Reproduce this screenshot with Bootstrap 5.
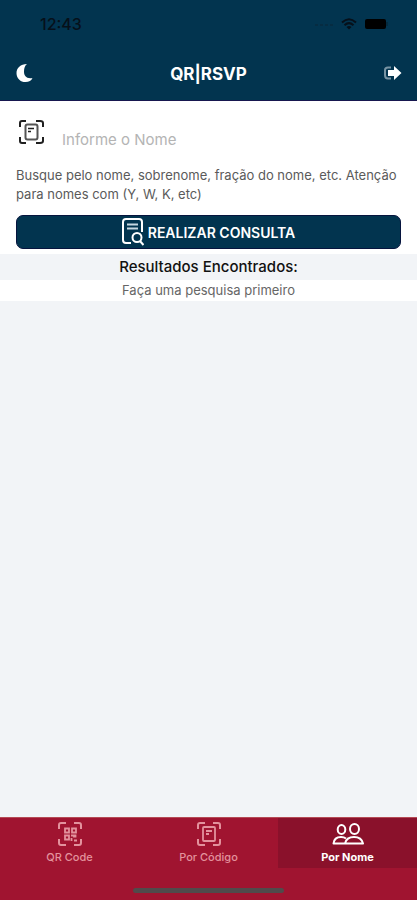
<!DOCTYPE html>
<html lang="pt-BR">
<head>
<meta charset="utf-8">
<meta name="viewport" content="width=device-width, initial-scale=1">
<title>QR|RSVP</title>
<link href="https://cdn.jsdelivr.net/npm/bootstrap@5.3.0/dist/css/bootstrap.min.css" rel="stylesheet">
<style>
body { font-family: Inter, "Liberation Sans", sans-serif; background: #f2f4f7; color: #111; }
svg { display: block; flex: none; }
.top-area { background: #02344f; border-bottom: 1px solid #17174f; }
.status-row { height: 48px; padding: 0 29px 0 40px; color: #06101a; }
.clock { font-size: 16px; font-weight: 500; }
.title-row { height: 52px; padding: 0 15px; }
.app-title { font-size: 17px; font-weight: 700; color: #fff; }
.icon-btn { border: 0; background: none; padding: 0; color: #fff; }
.name-row { height: 62px; padding: 0 16px; }
.name-input, .name-input:focus { border: 0; background: none; box-shadow: none; padding: 16px 0 0; font-size: 15px; }
.name-input::placeholder { color: #b4b4b4; }
.hint { font-size: 13px; line-height: 19px; color: #5a5a5a; padding: 3px 8px 0 16px; margin-bottom: 11px; }
.search-wrap { padding: 0 16px 5px; }
.search-btn, .search-btn:hover { height: 34px; border: 1px solid #06143e; border-radius: 7px; background: #02344f; color: #fff; font-size: 14px; font-weight: 600; }
.results-title { font-size: 15px; font-weight: 500; line-height: 26px; background: #f2f4f7; }
.results-note { font-size: 13px; line-height: 21px; color: #666; }
.tab-area { background: #a01430; border-top: 1px solid #b54a55; }
.tab-link { height: 50px; padding-top: 1px; color: #e3929d; font-size: 11px; font-weight: 500; line-height: 16px; text-decoration: none; }
.tab-link.active { background: #8a112b; color: #fff; font-weight: 700; }
.tab-icon { height: 30px; }
.home-zone { height: 32px; padding-bottom: 7px; }
.home-bar { width: 36%; height: 5px; border-radius: 3px; background: #514a4b; }
</style>
<script src="https://cdn.jsdelivr.net/npm/bootstrap@5.3.0/dist/js/bootstrap.bundle.min.js"></script>
</head>
<body class="d-flex flex-column min-vh-100">
<header class="top-area">
  <div class="status-row d-flex align-items-center justify-content-between">
    <span class="clock">12:43</span>
    <div class="d-flex align-items-center gap-2">
      <svg width="18" height="3" viewBox="0 0 18 3" fill="#062c42"><path d="M0 1h3v2H0zM5 1h3v2H5zM10 1h3v2h-3zM15 1h3v2h-3z"/></svg>
      <svg width="16" height="12" viewBox="0 0 16 12" fill="none" stroke="currentColor" stroke-width="2"><path d="M1 4.5Q8-2 15 4.5M3.5 7.200Q8 3 12.500 7.200"/><path d="M5.500 9Q8 7 10.500 9L8 11.500z" fill="currentColor" stroke="none"/></svg>
      <svg width="23" height="10" viewBox="0 0 23 10"><rect width="21" height="10" rx="2" fill="#000"/><path d="M22 3v4" stroke="#06202f"/></svg>
    </div>
  </div>
  <div class="title-row d-flex align-items-center justify-content-between">
    <button class="icon-btn" type="button" aria-label="Modo escuro"><svg width="20" height="20" viewBox="0 0 20 20" fill="currentColor"><path d="M12 0C5.500 0 1.500 4 1.500 9.200S5.500 18 10.500 18c3.500 0 6-1.500 7-4-6 1-8.500-2-8.500-6.500C9 4 10 1.500 12 0z"/></svg></button>
    <h1 class="app-title m-0">QR|RSVP</h1>
    <button class="icon-btn" type="button" aria-label="Sair"><svg width="20" height="20" viewBox="0 0 20 20"><path d="M9 3.500H6Q3 3.500 3 6v5q0 3.500 3 3.500h3" fill="none" stroke="#7894a4" stroke-width="2"/><path d="M6 6h6V2l7.500 7-7.500 7v-4H6z" fill="#fff"/></svg></button>
  </div>
</header>
<main class="flex-grow-1">
  <form class="bg-white">
    <div class="name-row d-flex align-items-center gap-3">
      <label for="nome" aria-label="Nome"><svg width="30" height="26" viewBox="0 0 30 26" fill="none" stroke="#202020" stroke-width="2"><path d="M4 8V4q0-2 2-2h4M20 2h4q3 0 3 2v4M4 18v4q0 2 2 2h4M20 24h4q3 0 3-2v-4"/><rect x="9.500" y="5.500" width="12" height="15" rx="2" stroke="#555"/><path d="M12 9.500h6M12 12.500h3" stroke-width="1.500"/></svg></label>
      <input class="form-control name-input" id="nome" type="text" placeholder="Informe o Nome">
    </div>
    <p class="hint">Busque pelo nome, sobrenome, fração do nome, etc. Atenção para nomes com (Y, W, K, etc)</p>
    <div class="search-wrap">
      <button class="btn search-btn w-100 d-flex align-items-center justify-content-center gap-1 p-0" type="button">
        <svg width="22" height="28" viewBox="0 0 22 28" fill="none" stroke="#fff" stroke-width="2"><path d="M9 25H4q-3 0-3-3V4q0-3 3-3h13q3 0 3 3v10"/><path d="M5 6.500h11M5 10.500h11" stroke="#c6d7e1"/><circle cx="15" cy="19.500" r="4.500"/><path d="m18 23 3.500 4"/></svg>
        <span>REALIZAR CONSULTA</span>
      </button>
    </div>
  </form>
  <section class="bg-white text-center">
    <h2 class="results-title m-0">Resultados Encontrados:</h2>
    <p class="results-note m-0">Faça uma pesquisa primeiro</p>
  </section>
</main>
<footer class="tab-area">
  <nav class="row g-0 text-center">
    <a class="col tab-link" href="#qr">
      <span class="tab-icon d-flex align-items-center justify-content-center"><svg width="26" height="26" viewBox="0 0 26 26" fill="none" stroke="currentColor" stroke-width="2"><path d="M2 8V4q0-2 2-2h5M17 2h5q2 0 2 2v4M2 18v4q0 2 2 2h5M17 24h5q2 0 2-2v-4"/><path d="M8 7.500h4v4H8zM15 7.500h4v4h-4zM8 14.500h4v4H8zM14 14.500h3v2M18.500 13.500v3M17 19.500h3M14.500 20v-3" stroke-width="1.800"/></svg></span>
      <span class="d-block">QR Code</span>
    </a>
    <a class="col tab-link" href="#codigo">
      <span class="tab-icon d-flex align-items-center justify-content-center"><svg width="26" height="26" viewBox="0 0 26 26" fill="none" stroke="currentColor" stroke-width="2"><path d="M2 8V4q0-2 2-2h5M17 2h5q2 0 2 2v4M2 18v4q0 2 2 2h5M17 24h5q2 0 2-2v-4"/><rect x="7" y="6" width="12" height="14" rx="1" stroke-width="1.800"/><path d="M10 10h6M10 13h3" stroke-width="1.800"/></svg></span>
      <span class="d-block">Por Código</span>
    </a>
    <a class="col tab-link active" href="#nome" aria-current="page">
      <span class="tab-icon d-flex align-items-center justify-content-center"><svg width="32" height="24" viewBox="0 0 32 24" fill="none" stroke="currentColor" stroke-width="2" stroke-linejoin="round"><ellipse cx="9.500" cy="7.500" rx="3.800" ry="4.500"/><ellipse cx="22.500" cy="7" rx="4.500" ry="5"/><path d="M13 21.500H1.500C2 17 5 15 9 15q3 0 5 1.500M13 21.500C14 17 18 15 22 15c5 0 8 2 9 6.500z"/></svg></span>
      <span class="d-block">Por Nome</span>
    </a>
  </nav>
  <div class="home-zone d-flex align-items-end justify-content-center"><div class="home-bar"></div></div>
</footer>
</body>
</html>
